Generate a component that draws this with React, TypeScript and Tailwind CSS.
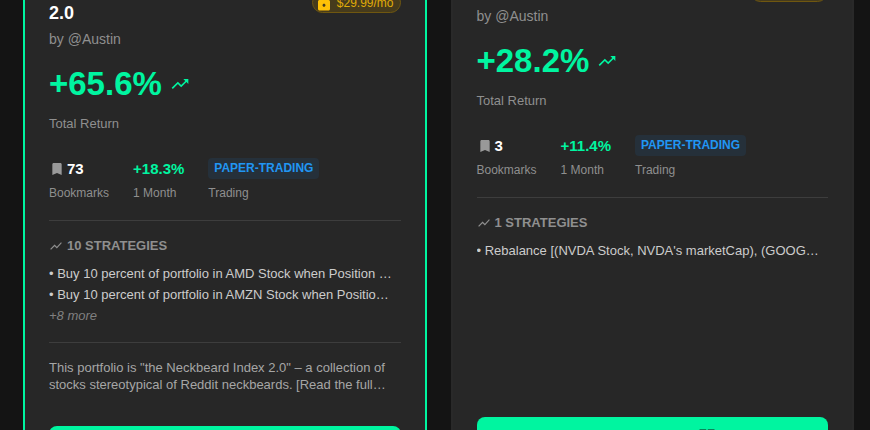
import type { ReactNode } from "react";
import { MdBookmark, MdDashboard, MdLock, MdShowChart, MdTrendingUp } from "react-icons/md";

type Portfolio = {
  id: string;
  title?: string;
  author: string;
  price?: string;
  totalReturn: string;
  bookmarks: number;
  monthReturn: string;
  strategyCount: number;
  strategies: string[];
  more?: string;
  description?: string;
  featured?: boolean;
};

const portfolios: Portfolio[] = [
  {
    id: "neckbeard-index",
    title: "2.0",
    author: "@Austin",
    price: "$29.99/mo",
    totalReturn: "+65.6%",
    bookmarks: 73,
    monthReturn: "+18.3%",
    strategyCount: 10,
    strategies: [
      "Buy 10 percent of portfolio in AMD Stock when Position …",
      "Buy 10 percent of portfolio in AMZN Stock when Positio…",
    ],
    more: "+8 more",
    description:
      'This portfolio is "the Neckbeard Index 2.0" – a collection of stocks stereotypical of Reddit neckbeards. [Read the full…',
    featured: true,
  },
  {
    id: "rebalance",
    author: "@Austin",
    totalReturn: "+28.2%",
    bookmarks: 3,
    monthReturn: "+11.4%",
    strategyCount: 1,
    strategies: ["Rebalance [(NVDA Stock, NVDA's marketCap), (GOOG…"],
  },
];

export default function App() {
  return (
    <main className="h-screen overflow-hidden bg-[#141414] pr-4 pl-[23px] font-['Liberation_Sans',Arial,sans-serif]">
      <div className="-mt-12 grid grid-cols-2 gap-6">
        {portfolios.map((portfolio) => (
          <PortfolioCard key={portfolio.id} portfolio={portfolio} />
        ))}
      </div>
    </main>
  );
}

function PortfolioCard({ portfolio }: { portfolio: Portfolio }) {
  const { featured, price } = portfolio;

  return (
    <article
      className={`flex min-w-0 flex-col rounded-2xl border-2 bg-[#272727] px-6 ${
        featured ? "border-[#00f5a0] pt-[46px] pb-6" : "border-[#292929] pt-[23px] pb-[33px]"
      }`}
    >
      <header className="flex items-start justify-between">
        <div>
          <h2 className="min-h-[27px] text-lg leading-[27px] font-bold text-white">
            {portfolio.title}
          </h2>
          <p className="mt-0.5 text-sm leading-5 text-[#8f8f8f]">by {portfolio.author}</p>
        </div>
        <span
          className={`flex items-center gap-1 rounded-full border border-[#6f5710] bg-[#463b1c] pr-1.5 pl-0.5 text-xs text-[#e0ac08] ${
            price ? "-mt-2 h-[21px]" : "mt-1 h-[21px] w-[78px]"
          }`}
        >
          {price ? <MdLock aria-hidden="true" className="size-[18px] text-[#ffc107]" /> : null}
          {price}
        </span>
      </header>

      <div className="mt-3.5 flex items-center gap-2 text-[#00f5a0]">
        <p className="text-[33px] leading-[42px] font-bold">{portfolio.totalReturn}</p>
        <MdTrendingUp aria-hidden="true" className="size-5" />
      </div>
      <p className="mt-[9px] text-[13px] leading-5 text-[#8f8f8f]">Total Return</p>

      <div className="mt-6 flex gap-6">
        <Stat label="Bookmarks">
          <span className="flex items-center gap-0.5 text-white">
            <MdBookmark aria-hidden="true" className="size-4 text-[#999999]" />
            {portfolio.bookmarks}
          </span>
        </Stat>
        <Stat label="1 Month">
          <span className="text-[#00f5a0]">{portfolio.monthReturn}</span>
        </Stat>
        <Stat label="Trading">
          <span className="block rounded bg-[#25303a] px-1.5 text-xs leading-[21px] text-[#2196f3]">
            PAPER-TRADING
          </span>
        </Stat>
      </div>

      <section className="mt-[18px] border-t border-[#3d3d3d] pt-4">
        <h3 className="flex items-center gap-1 text-[13px] leading-[18px] font-bold text-[#8f8f8f]">
          <MdShowChart aria-hidden="true" className="size-3.5" />
          {portfolio.strategyCount} STRATEGIES
        </h3>
        <ul className="mt-2 text-[13px] leading-[21px] text-[#cccccc]">
          {portfolio.strategies.map((strategy) => (
            <li key={strategy} className="truncate">
              • {strategy}
            </li>
          ))}
        </ul>
        {portfolio.more ? (
          <p className="text-[13px] leading-[21px] text-[#808080] italic">{portfolio.more}</p>
        ) : null}
      </section>

      {portfolio.description ? (
        <p className="mt-4 mb-[33px] border-t border-[#3d3d3d] pt-4 text-[13px] leading-[17px] text-[#a6a6a6]">
          {portfolio.description}
        </p>
      ) : null}

      <button
        type="button"
        className="mt-auto flex h-10 w-full items-center justify-center gap-4 rounded-lg bg-[#00f5a0] text-sm font-bold text-[#141414]"
      >
        View Portfolio
        <MdDashboard aria-hidden="true" className="size-5" />
      </button>
    </article>
  );
}

function Stat({ label, children }: { label: string; children: ReactNode }) {
  return (
    <div>
      <div className="h-[21px] text-[15px] leading-[21px] font-bold">{children}</div>
      <p className="mt-[5px] text-xs leading-[18px] text-[#8f8f8f]">{label}</p>
    </div>
  );
}
